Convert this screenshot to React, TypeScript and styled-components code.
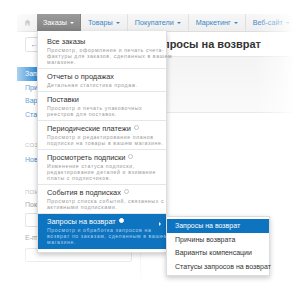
import styled, { createGlobalStyle } from 'styled-components';

const Global = createGlobalStyle`
  html, body { margin:0; padding:0; background:#fff; }
  body { font-family:"Liberation Sans", Arial, sans-serif; color:#333; }
`;

const Screen = styled.div`
  position:relative;
  width:297px;
  height:297px;
  overflow:hidden;
  background:#fff;
`;

const Page = styled.div`
  width:330px;
  padding:14px 0 0 17px;
`;

const NavBar = styled.div`
  display:flex;
  height:18px;
  background:linear-gradient(#f7f7f7, #eeeeee);
  border-bottom:1px solid #dddddd;
  box-sizing:border-box;
`;

const HomeTab = styled.div`
  width:20px;
  display:flex;
  align-items:center;
  justify-content:center;
`;

const NavTab = styled.div<{ $active?: boolean }>`
  position:relative;
  display:flex;
  align-items:center;
  gap:3px;
  padding:0 ${p => (p.$active ? 6 : 7)}px;
  font-size:7.2px;
  color:${p => (p.$active ? '#fff' : '#3a86c8')};
  background:${p => (p.$active ? 'linear-gradient(#9b9b9b, #838383)' : 'transparent')};
  border-right:1px solid ${p => (p.$active ? '#838383' : '#e0e0e0')};
`;

const Caret = styled.span`
  width:0;
  height:0;
  border-left:2px solid transparent;
  border-right:2px solid transparent;
  border-top:2px solid currentColor;
`;

const Body = styled.div`
  display:flex;
`;

const Sidebar = styled.div`
  width:123px;
  flex:none;
  display:flex;
  flex-direction:column;
  border-right:1px solid #eee;
  font-size:7px;
  padding-bottom:40px;
`;

const BackBtn = styled.div`
  margin:5px 0 15px 8px;
  width:40px;
  height:15px;
  border:1px solid #d6d6d6;
  border-radius:2px;
  box-sizing:border-box;
  display:flex;
  align-items:center;
  padding-left:4px;
  color:#777;
  font-size:8px;
`;

const SideItem = styled.div<{ $active?: boolean; $top?: number }>`
  height:13.5px;
  line-height:13.5px;
  margin-top:${p => p.$top || 0}px;
  padding:0 8px;
  color:${p => (p.$active ? '#fff' : '#2a7bc2')};
  background:${p => (p.$active ? '#2f8ad4' : 'transparent')};
  white-space:nowrap;
`;

const SideHead = styled.div<{ $top: number }>`
  padding:0 8px;
  margin-top:${p => p.$top}px;
  font-size:6px;
  letter-spacing:.3px;
  color:#aaa;
  text-transform:uppercase;
  line-height:10px;
`;

const Label = styled.div<{ $top: number }>`
  margin-top:${p => p.$top}px;
  padding:0 8px;
  color:#888;
  line-height:10px;
`;

const Input = styled.div<{ $top: number }>`
  margin:${p => p.$top}px 8px 0;
  height:14px;
  border:1px solid #d8d8d8;
  border-radius:2px;
  box-sizing:border-box;
`;

const Main = styled.div`
  flex:1;
`;

const TitleBar = styled.div`
  height:25px;
  display:flex;
  align-items:center;
  padding-left:9px;
  border-bottom:1px solid #e6e6e6;
  box-sizing:border-box;
`;

const Title = styled.h1`
  margin:0;
  font-size:11px;
  font-weight:bold;
  color:#333;
  white-space:nowrap;
`;

const Toolbar = styled.div`
  height:55px;
  background:linear-gradient(#f4f4f4, #fafafa);
  border-bottom:1px solid #e8e8e8;
`;

const Vignette = styled.div`
  position:absolute;
  inset:0;
  z-index:2;
  pointer-events:none;
  background:
    linear-gradient(to right, #fff 0px, rgba(255,255,255,0.75) 12px, rgba(255,255,255,0) 38px),
    linear-gradient(to left, #fff 3px, rgba(255,255,255,0.55) 16px, rgba(255,255,255,0) 42px),
    linear-gradient(to top, #fff 12px, rgba(255,255,255,0.6) 30px, rgba(255,255,255,0) 60px);
`;

const Menu = styled.div`
  position:absolute;
  z-index:3;
  top:100%;
  left:0;
  width:130px;
  padding:3px 0;
  background:#fff;
  box-shadow:0 2px 5px rgba(0,0,0,.22);
  border:1px solid #ddd;
  border-top:none;
  box-sizing:border-box;
`;

const Item = styled.div<{ $active?: boolean }>`
  position:relative;
  padding:3.5px 8px 3px 9px;
  border-bottom:1px solid ${p => (p.$active ? 'transparent' : '#e6e6e6')};
  background:${p => (p.$active ? '#0e74bf' : '#fff')};
  &:last-child { border-bottom:none; padding-bottom:4px; }
`;

const ItemTitle = styled.div<{ $active?: boolean }>`
  display:flex;
  align-items:center;
  gap:3px;
  font-size:7.4px;
  line-height:8px;
  color:${p => (p.$active ? '#fff' : '#333')};
  white-space:nowrap;
`;

const Info = styled.span<{ $active?: boolean }>`
  width:3px;
  height:3px;
  border-radius:50%;
  border:1px solid ${p => (p.$active ? '#fff' : '#c4c4c4')};
  background:${p => (p.$active ? '#fff' : 'transparent')};
  margin-top:-3px;
`;

const Desc = styled.div<{ $active?: boolean }>`
  margin-top:1.5px;
  font-size:5.2px;
  letter-spacing:.6px;
  line-height:6px;
  color:${p => (p.$active ? '#a9cff0' : '#9a9a9a')};
  white-space:pre;
`;

const SubArrow = styled.span`
  position:absolute;
  right:5px;
  top:8px;
  width:0;
  height:0;
  border-top:2px solid transparent;
  border-bottom:2px solid transparent;
  border-left:2px solid #fff;
`;

const SubMenu = styled.div`
  position:absolute;
  left:100%;
  top:2px;
  width:104px;
  padding:2px 0;
  background:#fff;
  box-shadow:0 2px 5px rgba(0,0,0,.22);
  border:1px solid #ddd;
  box-sizing:border-box;
`;

const SubItem = styled.div<{ $active?: boolean }>`
  height:13.5px;
  line-height:13.5px;
  padding:0 8px;
  font-size:7px;
  white-space:nowrap;
  color:${p => (p.$active ? '#fff' : '#333')};
  background:${p => (p.$active ? '#0e74bf' : 'transparent')};
`;

const items = [
  { title: 'Все заказы', desc: 'Просмотр, оформление и печать счета-\nфактуры для заказов, сделанных в вашем\nмагазине.' },
  { title: 'Отчеты о продажах', desc: 'Детальная статистика продаж.' },
  { title: 'Поставки', desc: 'Просмотр и печать упаковочных\nреестров для поставок.' },
  { title: 'Периодические платежи', info: true, desc: 'Просмотр и редактирование планов\nподписки на товары в вашем магазине.' },
  { title: 'Просмотреть подписки', info: true, desc: 'Изменение статуса подписки,\nредактирование деталей и взимание\nплаты с подписчиков.' },
  { title: 'События в подписках', info: true, desc: 'Просмотр списка событий, связанных с\nактивными подписками.' },
  { title: 'Запросы на возврат', info: true, active: true, desc: 'Просмотр и обработка запросов на\nвозврат по заказам, сделанным в вашем\nмагазине.' },
];

const subItems = ['Запросы на возврат', 'Причины возврата', 'Варианты компенсации', 'Статусы запросов на возврат'];

function HomeIcon() {
  return (
    <svg width="7" height="7" viewBox="0 0 16 16">
      <path d="M8 1 L15 8 H13 V15 H9.5 V10.5 H6.5 V15 H3 V8 H1 Z" fill="#b5b5b5" />
    </svg>
  );
}

export default function App() {
  return (
    <Screen>
      <Global />
      <Page>
        <NavBar>
          <HomeTab><HomeIcon /></HomeTab>
          <NavTab $active>
            Заказы <Caret />
            <Menu>
              {items.map(it => (
                <Item key={it.title} $active={it.active}>
                  <ItemTitle $active={it.active}>
                    {it.title}
                    {it.info && <Info $active={it.active} />}
                  </ItemTitle>
                  <Desc $active={it.active}>{it.desc}</Desc>
                  {it.active && (
                    <>
                      <SubArrow />
                      <SubMenu>
                        {subItems.map((s, i) => (
                          <SubItem key={s} $active={i === 0}>{s}</SubItem>
                        ))}
                      </SubMenu>
                    </>
                  )}
                </Item>
              ))}
            </Menu>
          </NavTab>
          <NavTab>Товары <Caret /></NavTab>
          <NavTab>Покупатели <Caret /></NavTab>
          <NavTab>Маркетинг <Caret /></NavTab>
          <NavTab>Веб-сайт <Caret /></NavTab>
        </NavBar>
        <Body>
          <Sidebar>
            <BackBtn>←</BackBtn>
            <SideItem $active>Запросы на возврат</SideItem>
            <SideItem>Причины возврата</SideItem>
            <SideItem>Варианты компенсации</SideItem>
            <SideItem>Статусы запросов на возврат</SideItem>
            <SideHead $top={19}>Создать</SideHead>
            <SideItem $top={3}>Новый запрос на возврат</SideItem>
            <SideHead $top={20}>Поиск</SideHead>
            <Label $top={3}>Покупатель</Label>
            <Input $top={3} />
            <Label $top={6}>E-mail</Label>
            <Input $top={5} />
          </Sidebar>
          <Main>
            <TitleBar><Title>Запросы на возврат</Title></TitleBar>
            <Toolbar />
          </Main>
        </Body>
      </Page>
      <Vignette />
    </Screen>
  );
}
